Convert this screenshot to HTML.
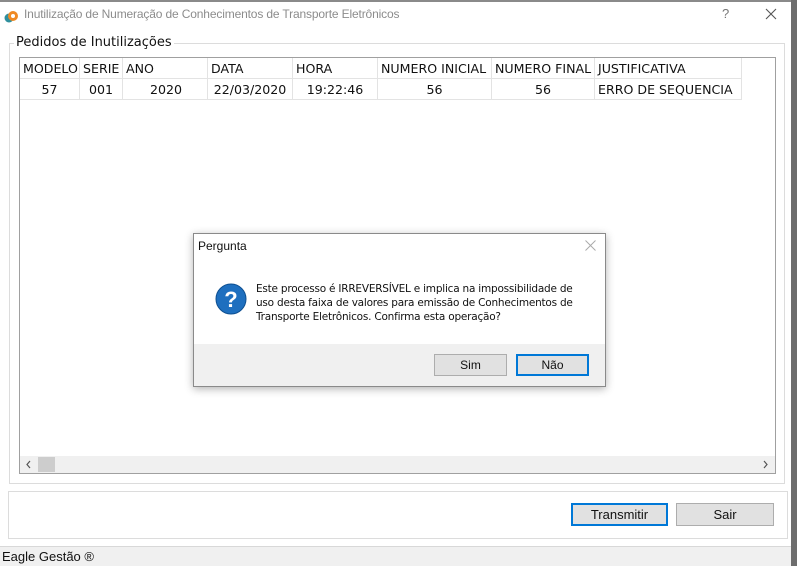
<!DOCTYPE html>
<html><head><meta charset="utf-8"><style>
*{box-sizing:border-box;margin:0;padding:0}
body{width:797px;height:566px;overflow:hidden;background:#fff;position:relative;font-family:"DejaVu Sans","Liberation Sans",sans-serif}
.abs{position:absolute}
.topstrip{left:0;top:0;width:797px;height:2px;background:#8a8a8a}
.rightedge{left:791px;top:0;width:6px;height:566px;background:#6d6d6d}
.title{left:24px;top:7px;font-family:"Liberation Sans",sans-serif;font-size:12px;letter-spacing:-0.15px;color:#8c8c8c;white-space:nowrap}
.grp{left:9px;top:43px;width:776px;height:441px;border:1px solid #dcdcdc}
.grplbl{left:14px;top:35px;background:#fff;padding:0 2px;font-size:13px;color:#111;font-family:"DejaVu Sans",sans-serif}
.grid{left:19px;top:57px;width:757px;height:417px;border:1px solid #a0a0a0;background:#fff}
.cell{position:absolute;height:21px;line-height:21px;font-size:12.6px;color:#111;white-space:nowrap;border-right:1px solid #e3e3e3;border-bottom:1px solid #e3e3e3;padding-left:3px;overflow:hidden}
.c{text-align:center;padding-left:0}
.sb{left:20px;top:456px;width:755px;height:17px;background:#f0f0f0}
.bottom{left:8px;top:491px;width:780px;height:48px;border:1px solid #dcdcdc}
.btn{position:absolute;background:#e1e1e1;border:1px solid #adadad;font-family:"Liberation Sans",sans-serif;font-size:13px;text-align:center;color:#111}
.status{left:0;top:546px;width:791px;height:20px;background:#f0f0f0;border-top:1px solid #d8d8d8;font-size:13px;line-height:19px;padding-left:2px;color:#111;font-family:"Liberation Sans",sans-serif}
.dlg{left:193px;top:233px;width:413px;height:154px;background:#fff;border:1px solid #8a8a8a;box-shadow:0 2px 8px rgba(0,0,0,.3)}
.dfoot{left:0;top:110px;width:411px;height:42px;background:#f0f0f0}
</style></head><body>
<div class="abs topstrip"></div>
<div class="abs" style="left:4px;top:9px;width:14px;height:14px">
<svg width="14" height="14"><circle cx="5" cy="8" r="4.5" fill="#2f8f9d"/><circle cx="9" cy="6" r="5" fill="#f08a24"/><circle cx="9" cy="6" r="2" fill="#fff"/></svg></div>
<div class="abs title">Inutilização de Numeração de Conhecimentos de Transporte Eletrônicos</div>
<div class="abs" style="left:722px;top:6px;font-size:13px;color:#777;font-family:'Liberation Sans',sans-serif">?</div>
<svg class="abs" style="left:765px;top:8px" width="12" height="12"><path d="M1 1L11 11M11 1L1 11" stroke="#555" stroke-width="1.1"/></svg>
<div class="abs rightedge"></div>

<div class="abs grp"></div>
<div class="abs grplbl">Pedidos de Inutilizações</div>
<div class="abs grid">
<div class="cell" style="left:0;top:0;width:60px">MODELO</div>
<div class="cell" style="left:60px;top:0;width:43px">SERIE</div>
<div class="cell" style="left:103px;top:0;width:85px">ANO</div>
<div class="cell" style="left:188px;top:0;width:85px">DATA</div>
<div class="cell" style="left:273px;top:0;width:85px">HORA</div>
<div class="cell" style="left:358px;top:0;width:114px">NUMERO INICIAL</div>
<div class="cell" style="left:472px;top:0;width:103px">NUMERO FINAL</div>
<div class="cell" style="left:575px;top:0;width:147px">JUSTIFICATIVA</div>
<div class="cell c" style="left:0;top:21px;width:60px">57</div>
<div class="cell c" style="left:60px;top:21px;width:43px">001</div>
<div class="cell" style="left:103px;top:21px;width:85px;padding-left:27px">2020</div>
<div class="cell c" style="left:188px;top:21px;width:85px">22/03/2020</div>
<div class="cell c" style="left:273px;top:21px;width:85px">19:22:46</div>
<div class="cell c" style="left:358px;top:21px;width:114px">56</div>
<div class="cell c" style="left:472px;top:21px;width:103px">56</div>
<div class="cell" style="left:575px;top:21px;width:147px">ERRO DE SEQUENCIA</div>
</div>
<div class="abs sb"></div>
<div class="abs" style="left:38px;top:457px;width:17px;height:15px;background:#cdcdcd"></div>
<svg class="abs" style="left:25px;top:460px" width="8" height="9"><path d="M5 1L2 4.5L5 8" stroke="#555" stroke-width="1.2" fill="none"/></svg>
<svg class="abs" style="left:761px;top:460px" width="8" height="9"><path d="M3 1L6 4.5L3 8" stroke="#555" stroke-width="1.2" fill="none"/></svg>

<div class="abs bottom"></div>
<div class="btn" style="left:571px;top:503px;width:97px;height:23px;line-height:20px;border:2px solid #0078d7">Transmitir</div>
<div class="btn" style="left:676px;top:503px;width:98px;height:23px;line-height:21px">Sair</div>
<div class="abs status">Eagle Gestão ®</div>

<div class="abs dlg">
<div class="abs" style="left:4px;top:5px;font-size:12px;font-family:'Liberation Sans',sans-serif;color:#111">Pergunta</div>
<svg class="abs" style="left:391px;top:6px" width="11" height="11"><path d="M.5 .5L10.5 10.5M10.5 .5L.5 10.5" stroke="#aaa" stroke-width="1"/></svg>
<svg class="abs" style="left:21px;top:49px" width="32" height="32"><circle cx="16" cy="16" r="15" fill="#1e6fbf" stroke="#0d4f91" stroke-width="1"/><text x="16" y="24" text-anchor="middle" font-family="Liberation Sans,sans-serif" font-weight="bold" font-size="22" fill="#fff">?</text></svg>
<div class="abs" style="left:62px;top:48px;font-size:10.5px;line-height:14px;font-family:'DejaVu Sans',sans-serif;color:#111;white-space:nowrap;letter-spacing:-0.22px">Este processo é IRREVERSÍVEL e implica na impossibilidade de<br>uso desta faixa de valores para emissão de Conhecimentos de<br>Transporte Eletrônicos. Confirma esta operação?</div>
<div class="abs dfoot"></div>
<div class="btn" style="left:240px;top:120px;width:73px;height:22px;line-height:20px;font-size:12px">Sim</div>
<div class="btn" style="left:322px;top:120px;width:73px;height:22px;line-height:18px;font-size:12px;border:2px solid #0078d7">Não</div>
</div>
</body></html>
